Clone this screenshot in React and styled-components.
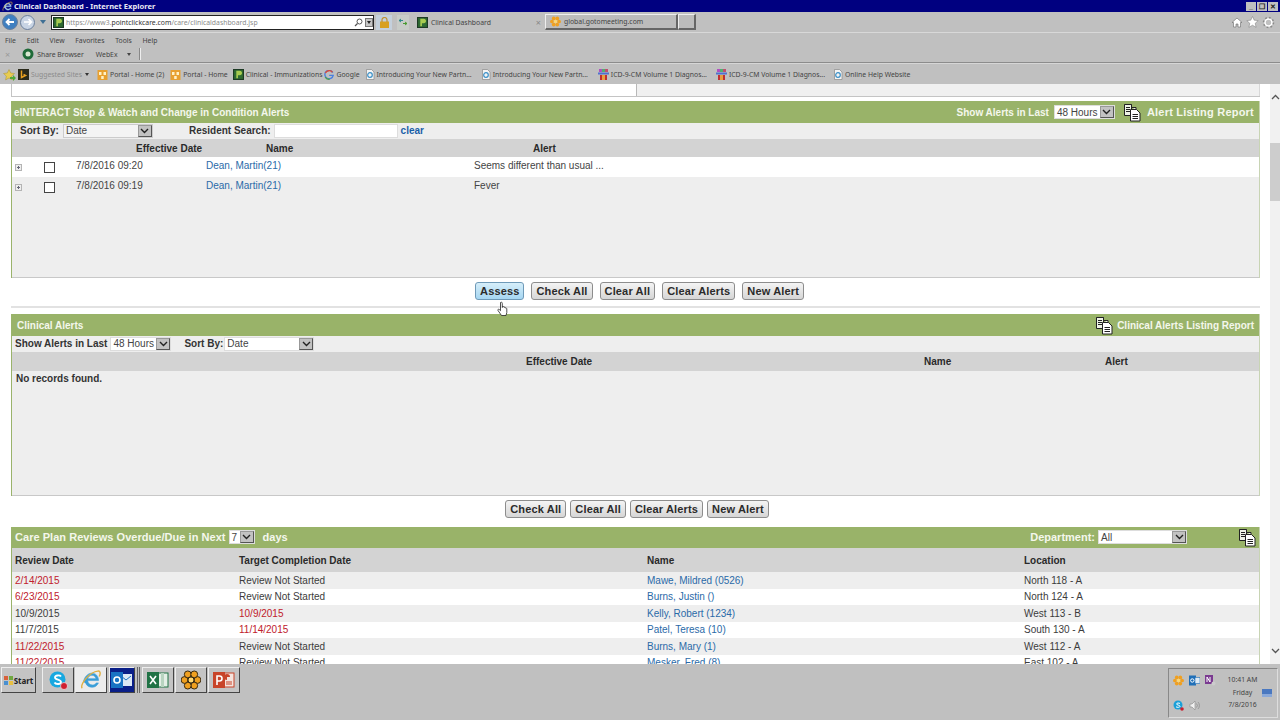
import React from "react";
import styled, { createGlobalStyle } from "styled-components";

const Global = createGlobalStyle`
  html, body { margin: 0; padding: 0; height: 100%; overflow: hidden; }
  body { font-family: "Liberation Sans", Arial, sans-serif; font-size: 10px; color: #222; }
  * { box-sizing: border-box; }
`;

const Page = styled.div`
  width: 1280px;
  height: 720px;
  display: flex;
  flex-direction: column;
  overflow: hidden;
  position: relative;
  background: #c0c0c0;
`;

/* ---------- browser chrome ---------- */

const TitleBar = styled.div`
  height: 12px;
  background: #000080;
  display: flex;
  align-items: center;
  padding-left: 2px;
  gap: 1px;
  color: #e8e8f4;
  font: bold 7.55px "Noto Sans", sans-serif;
`;

const WinButtons = styled.div`
  margin-left: auto;
  display: flex;
  gap: 1px;
  padding-right: 2px;
`;

const WinButton = styled.span`
  width: 10px;
  height: 9px;
  background: #c0c0c0;
  color: #222;
  font: bold 7px/9px "Liberation Sans", sans-serif;
  text-align: center;
`;

const AddressRow = styled.div`
  height: 21px;
  display: flex;
  align-items: center;
  padding-left: 2px;
  border-bottom: 1px solid #d8d8d8;
  position: relative;
`;

const NavCircle = styled.span`
  width: ${(p) => p.$size}px;
  height: ${(p) => p.$size}px;
  border-radius: 50%;
  background: ${(p) => p.$bg};
  border: 1px solid #6a7f9c;
  display: flex;
  align-items: center;
  justify-content: center;
  margin-right: 2px;
`;

const Caret = styled.span`
  width: 0;
  height: 0;
  border-left: ${(p) => p.$s || 3}px solid transparent;
  border-right: ${(p) => p.$s || 3}px solid transparent;
  border-top: ${(p) => (p.$s || 3) + 1}px solid ${(p) => p.$color || "#3f6f94"};
  margin: 0 ${(p) => p.$gap || 0}px;
`;

const AddressField = styled.div`
  width: 323px;
  height: 15px;
  background: #fff;
  border: 1px solid #222;
  display: flex;
  align-items: center;
  padding: 0 0 0 1px;
  font: 6.85px "Noto Sans", sans-serif;
  color: #8a8a8a;
  margin-left: 2px;
  b { font-weight: 400; color: #333; }
`;

const AddressText = styled.span`
  margin-left: 2px;
  flex: 1;
  white-space: nowrap;
`;

const DropBox = styled.span`
  width: 8px;
  height: 9px;
  background: #c6c6c6;
  border: 1px solid #777;
  display: flex;
  align-items: center;
  justify-content: center;
  margin-left: 2px;
`;

const ToolCell = styled.span`
  width: ${(p) => p.$w}px;
  height: 15px;
  background: ${(p) => p.$bg};
  display: flex;
  align-items: center;
  justify-content: center;
`;

const Tab = styled.div`
  height: 16px;
  width: ${(p) => p.$w}px;
  display: flex;
  align-items: center;
  gap: 3px;
  padding: 0 4px;
  font: 6.85px "Noto Sans", sans-serif;
  color: #444;
  background: ${(p) => (p.$raised ? "#bcbcbc" : "transparent")};
  border: ${(p) => (p.$raised ? "1px solid #666" : "none")};
  border-top-color: #eee;
  border-left-color: #eee;
  border-right-width: ${(p) => (p.$raised ? 2 : 0)}px;
  border-bottom-width: ${(p) => (p.$raised ? 2 : 0)}px;
  span:last-child { margin-left: auto; color: #888; font-size: 9px; }
`;

const RightTools = styled.div`
  margin-left: auto;
  display: flex;
  gap: 3px;
  padding-right: 5px;
  align-items: center;
`;

const MenuArea = styled.div`
  height: 30px;
  display: flex;
  flex-direction: column;
  border-bottom: 1px solid #8c8c8c;
  padding-left: 5px;
  font: 6.85px "Noto Sans", sans-serif;
  color: #444;
`;

const MenuRow = styled.div`
  height: 14px;
  display: flex;
  align-items: center;
  gap: ${(p) => p.$gap}px;
`;

const Sep = styled.span`
  width: 2px;
  height: 12px;
  background: #888;
  border-right: 1px solid #eee;
`;

const FavBar = styled.div`
  height: 21px;
  border-top: 1px solid #d6d6d6;
  display: flex;
  align-items: center;
  padding: 1px 0 0 3px;
  font: 6.85px "Noto Sans", sans-serif;
  color: #444;
  white-space: nowrap;
`;

const Fav = styled.span`
  display: inline-flex;
  align-items: center;
  gap: 2px;
  margin-left: ${(p) => p.$left}px;
  color: ${(p) => p.$color || "inherit"};
`;

/* ---------- content ---------- */

const Body = styled.div`
  height: 580px;
  display: flex;
  background: #fff;
  overflow: hidden;
`;

const Main = styled.div`
  width: 1270px;
  padding-left: 11px;
  padding-right: 10px;
  overflow: hidden;
`;

const Scrollbar = styled.div`
  width: 10px;
  background: #f1f1f1;
  display: flex;
  flex-direction: column;
  align-items: center;
  padding: 10px 0;
`;

const Thumb = styled.div`
  width: 10px;
  height: 58px;
  margin-top: 43px;
  background: #cdcdcd;
`;

const Chevron = styled.svg`
  width: 9px;
  height: 6px;
  flex: none;
  margin-top: ${(p) => (p.$bottom ? "auto" : "0")};
`;

const TopStub = styled.div`
  height: 13px;
  display: grid;
  grid-template-columns: 624px 1fr;
  border-bottom: 1px solid #c4c4c4;
  border-left: 1px solid #c4c4c4;
  margin-bottom: 4px;
`;

const StubRight = styled.div`
  background: #f0f0f0;
  border-left: 1px solid #b8b8b8;
  border-right: 1px solid #d8d8d8;
`;

const Section = styled.section`
  border-left: 1px solid #9ab36b;
  border-right: 1px solid #c8d4b4;
  margin-top: ${(p) => p.$top || 0}px;
`;

const GreenBar = styled.div`
  height: ${(p) => p.$h}px;
  background: #99b369;
  display: flex;
  align-items: center;
  padding: ${(p) => p.$pad || "0 5px 0 2px"};
  color: #f4f7ec;
  font-weight: bold;
  white-space: nowrap;
`;

const BarTitle = styled.span`
  font-size: ${(p) => p.$size || 10}px;
  letter-spacing: ${(p) => p.$ls || 0}px;
`;

const BarRight = styled.div`
  margin-left: auto;
  display: flex;
  align-items: center;
  gap: ${(p) => p.$gap || 5}px;
`;

const Select = styled.span`
  width: ${(p) => p.$w}px;
  height: ${(p) => p.$h || 14}px;
  margin-right: ${(p) => p.$mr || 0}px;
  background: ${(p) => p.$bg || "#fff"};
  display: inline-flex;
  align-items: center;
  justify-content: space-between;
  padding-left: 2px;
  font-weight: 400;
  font-size: 10px;
  color: #444;
  border: 1px solid ${(p) => p.$border || "#ddd"};
`;

const SelectBtn = styled.span`
  width: 14px;
  height: 100%;
  background: #c2c2c2;
  border: 1px solid #555;
  border-top-color: #999;
  border-left-color: #999;
  display: flex;
  align-items: center;
  justify-content: center;
`;

const FilterRow = styled.div`
  height: ${(p) => p.$h}px;
  background: #eeeeee;
  display: flex;
  align-items: center;
  padding-left: ${(p) => p.$left}px;
  padding-bottom: 1px;
  font-weight: bold;
  font-size: 10px;
  color: #333;
  white-space: nowrap;
`;

const Gap = styled.span`
  display: inline-block;
  flex: none;
  width: ${(p) => p.$w}px;
`;

const TextInput = styled.span`
  width: 124px;
  height: 14px;
  background: #fff;
  border: 1px solid #ddd;
  margin-left: 3px;
`;

const ClearLink = styled.span`
  color: #1a5fa8;
  margin-left: 3px;
`;

const HeadRow = styled.div`
  height: ${(p) => p.$h}px;
  background: #d3d3d3;
  display: grid;
  grid-template-columns: ${(p) => p.$cols};
  align-items: center;
  font-weight: bold;
  font-size: 10px;
  color: #2a2a2a;
`;

const AlertRow = styled.div`
  height: 20px;
  background: ${(p) => (p.$alt ? "#eeeeee" : "#fff")};
  display: grid;
  grid-template-columns: 32px 32px 130px 268px 1fr;
  align-items: center;
  padding-bottom: 3px;
  font-size: 10px;
  color: #444;
`;

const Expander = styled.span`
  width: 7px;
  height: 7px;
  margin: 4px 0 0 3px;
  border: 1px solid #b4b4b4;
  background:
    linear-gradient(#667, #667) center / 3px 1px no-repeat,
    linear-gradient(#667, #667) center / 1px 3px no-repeat,
    #eeeeee;
`;

const CheckBox = styled.span`
  width: 11px;
  height: 11px;
  background: #fff;
  border: 1px solid #444;
  margin-top: 4px;
`;

const PersonLink = styled.span`
  color: #2a6aa8;
`;

const Filler = styled.div`
  height: ${(p) => p.$h}px;
  background: #eeeeee;
  border-bottom: 1px solid #c8c8c8;
  font-weight: bold;
  font-size: 10px;
  color: #333;
  padding: ${(p) => p.$pad || 0};
`;

const ButtonBar = styled.div`
  height: ${(p) => p.$h}px;
  display: flex;
  justify-content: center;
  align-items: center;
  gap: ${(p) => p.$gap}px;
  padding-left: ${(p) => p.$shift || 0}px;
  padding-bottom: ${(p) => p.$down || 0}px;
  background: #fff;
  border-bottom: ${(p) => (p.$line ? "2px solid #e2e2e2" : "none")};
  margin: 0 -1px;
`;

const Btn = styled.button`
  height: 18px;
  padding: 0 4px;
  border-radius: 3px;
  border: 1px solid ${(p) => (p.$active ? "#6f9ab8" : "#8d8d8d")};
  background: ${(p) =>
    p.$active
      ? "linear-gradient(#d6eefa, #a6d6f2)"
      : "linear-gradient(#f4f4f4, #d6d6d6)"};
  font: bold 11px "Liberation Sans", sans-serif;
  letter-spacing: 0.15px;
  color: #2b2b2b;
`;

const CarePlanRow = styled.div`
  height: 16.5px;
  background: ${(p) => (p.$alt ? "#eeeeee" : "#fff")};
  display: grid;
  grid-template-columns: 224px 408px 377px 1fr;
  align-items: center;
  padding-left: 3px;
  font-size: 10px;
  color: #3c3c3c;
`;

const Overdue = styled.span`
  color: ${(p) => (p.$red ? "#c0202c" : "#3c3c3c")};
`;

/* ---------- taskbar ---------- */

const Taskbar = styled.div`
  height: 56px;
  flex: none;
  background: #c0c0c0;
  display: flex;
  align-items: flex-start;
  padding: 3px 2px 0 1px;
`;

const TaskGroup = styled.div`
  display: flex;
  gap: 1px;
  margin-left: ${(p) => p.$left || 0}px;
`;

const TaskBtn = styled.div`
  height: 26px;
  width: ${(p) => p.$w || 32}px;
  display: flex;
  align-items: center;
  justify-content: center;
  gap: 1px;
  background: ${(p) => (p.$active ? "#ececec" : p.$bg || "#c4c4c4")};
  border: 1px solid #eee;
  border-right-color: #444;
  border-bottom-color: #444;
  font: bold 8px "Noto Sans", sans-serif;
  color: #222;
`;

const TaskSep = styled.span`
  width: 3px;
  height: 26px;
  margin-left: ${(p) => p.$left}px;
  border-left: 1px solid ${(p) => p.$color};
  border-right: 1px solid ${(p) => p.$color};
`;

const Tray = styled.div`
  margin-left: auto;
  margin-top: 1px;
  width: 110px;
  height: 50px;
  border: 1px solid #888;
  border-right-color: #ddd;
  border-bottom-color: #ddd;
  display: grid;
  grid-template-columns: 54px 1fr 15px;
  align-items: center;
`;

const TrayIcons = styled.div`
  display: grid;
  grid-template-columns: repeat(3, 16px);
  gap: 14px 0;
  padding-left: 4px;
`;

const Clock = styled.div`
  font: 6.85px/12.500px "Noto Sans", sans-serif;
  color: #444;
  text-align: center;
`;

const Pointer = styled.svg`
  position: absolute;
  left: 497px;
  top: 301px;
  width: 11px;
  height: 16px;
`;

/* ---------- drawings ---------- */

const IeIcon = ({ size = 11, color = "#3d9ad6" }) => (
  <svg width={size} height={size} viewBox="0 0 16 16">
    <path d="M2.5 9.5C3 5.5 6 3 8.5 3c3 0 5 2.2 5 5.4H5.6c.2 2 1.5 3.2 3.3 3.2 1.2 0 2.2-.5 2.9-1.5h1.6c-.8 2-2.5 3.2-4.6 3.2-2.200 0-4-1.200-4.700-3M5.700 7h5.800C11.300 5.600 10.200 4.600 8.700 4.600 7.200 4.600 6 5.600 5.700 7Z" fill={color} stroke={color} strokeWidth=".4" />
    <path d="M1.500 14C0 11 7 2 13 1.500c2-.2 2 2 1 4" fill="none" stroke="#e0b040" strokeWidth="1" />
  </svg>
);

const PLogo = ({ size = 10 }) => (
  <svg width={size} height={size} viewBox="0 0 10 10" style={{ flex: "none" }}>
    <rect width="10" height="10" fill="#1d3a24" />
    <rect x="1" y="1" width="8" height="8" fill="#2f6b32" />
    <path d="M3 8.500V1.500h3c1.600 0 2.200 1 2.200 2.100S7.600 5.700 6 5.700H4.500v2.800Z" fill="#a8cc50" />
  </svg>
);

const PortalIcon = () => (
  <svg width="11" height="10" viewBox="0 0 10 10">
    <rect width="10" height="10" fill="#e8a030" />
    <rect x="1.500" y="2" width="2.500" height="3" fill="#fff2c8" />
    <rect x="6" y="2" width="2.500" height="3" fill="#fff2c8" />
    <rect x="3.700" y="6" width="2.500" height="3" fill="#fff2c8" />
  </svg>
);

const PageIeIcon = () => (
  <svg width="10" height="11" viewBox="0 0 10 11">
    <path d="M1.500.500h5l2.500 2.500v7.500h-7.500Z" fill="#f4f4f4" stroke="#888" strokeWidth=".7" />
    <circle cx="5" cy="6" r="2.300" fill="none" stroke="#3a90c8" strokeWidth="1.200" />
  </svg>
);

const IcdIcon = () => (
  <svg width="11" height="11" viewBox="0 0 11 11">
    <rect x="1" width="3" height="3" fill="#b050c0" />
    <rect x="4" width="3" height="3" fill="#50b070" />
    <rect x="7" width="3" height="3" fill="#c05070" />
    <rect y="3.500" width="11" height="2" fill="#5070d0" />
    <rect x="2" y="6" width="7" height="5" fill="#c03030" />
    <rect x="4" y="6" width="3" height="5" fill="#e8a040" />
  </svg>
);

const GoogleIcon = () => (
  <svg width="10" height="10" viewBox="0 0 10 10">
    <path d="M8.800 2.600A4.200 4.200 0 1 0 9.200 5.400H5.200" fill="none" stroke="#4a80e0" strokeWidth="1.400" />
    <path d="M1.400 3a4.200 4.200 0 0 1 7-.8" fill="none" stroke="#d84a3a" strokeWidth="1.400" />
    <path d="M1.200 7a4.200 4.200 0 0 0 4.500 2.200" fill="none" stroke="#50a050" strokeWidth="1.400" />
  </svg>
);

const FlowerIcon = ({ size = 10, dark }) => (
  <svg width={size} height={size} viewBox="0 0 20 20" style={{ flex: "none" }}>
    {[0, 60, 120, 180, 240, 300].map((a) => (
      <circle
        key={a}
        cx={10 + 6.500 * Math.cos((a * Math.PI) / 180)}
        cy={10 + 6.500 * Math.sin((a * Math.PI) / 180)}
        r="3.400"
        fill="#f0a020"
        stroke={dark ? "#3a2a10" : "none"}
        strokeWidth="1"
      />
    ))}
    <circle cx="10" cy="10" r="3" fill="#ffd870" stroke={dark ? "#3a2a10" : "none"} />
  </svg>
);

const DocsIcon = ({ size = 19 }) => (
  <svg width={size} height={size} viewBox="0 0 19 19" style={{ flex: "none" }}>
    <path d="M1.500 1.500h7v3H13v2" fill="#fff" stroke="#222" />
    <path d="M1.500 1.500h7v11h-7Z" fill="#eef2e6" stroke="#222" />
    <path d="M3 4.500h4M3 6.500h4M3 8.500h4" stroke="#222" />
    <path d="M7.500 6.500h6l3.500 3.500v8H7.500Z" fill="#fff" stroke="#222" />
    <path d="M9.500 11.500h5.500M9.500 13.500h5.500M9.500 15.500h5.500" stroke="#222" />
  </svg>
);

const SmallArrow = () => (
  <svg width="9" height="6" viewBox="0 0 9 6">
    <path d="M1 1l3.500 3.500L8 1" fill="none" stroke="#222" strokeWidth="1.400" />
  </svg>
);

const TrayEnv = () => (
  <svg width="11" height="11" viewBox="0 0 11 11">
    <rect width="7" height="10" y=".5" fill="#1f6fb8" />
    <rect x="6" y="2.500" width="5" height="6" fill="#dfeaf4" stroke="#1f6fb8" strokeWidth=".6" />
    <circle cx="3.300" cy="5.500" r="1.700" fill="none" stroke="#fff" />
  </svg>
);

const favourites = [
  { icon: <PortalIcon />, text: "Portal - Home (2)", left: 5 },
  { icon: <PortalIcon />, text: "Portal - Home", left: 6 },
  { icon: <PLogo size={11} />, text: "Clinical - Immunizations", left: 5 },
  { icon: <GoogleIcon />, text: "Google", left: 2 },
  { icon: <PageIeIcon />, text: "Introducing Your New Partn...", left: 5 },
  { icon: <PageIeIcon />, text: "Introducing Your New Partn...", left: 9 },
  { icon: <IcdIcon />, text: "ICD-9-CM Volume 1 Diagnos...", left: 10 },
  { icon: <IcdIcon />, text: "ICD-9-CM Volume 1 Diagnos...", left: 9 },
  { icon: <PageIeIcon />, text: "Online Help Website", left: 8 },
];

const carePlans = [
  { date: "2/14/2015", dateRed: true, target: "Review Not Started", name: "Mawe, Mildred (0526)", loc: "North 118 - A", alt: true },
  { date: "6/23/2015", dateRed: true, target: "Review Not Started", name: "Burns, Justin ()", loc: "North 124 - A" },
  { date: "10/9/2015", target: "10/9/2015", targetRed: true, name: "Kelly, Robert (1234)", loc: "West 113 - B", alt: true },
  { date: "11/7/2015", target: "11/14/2015", targetRed: true, name: "Patel, Teresa (10)", loc: "South 130 - A" },
  { date: "11/22/2015", dateRed: true, target: "Review Not Started", name: "Burns, Mary (1)", loc: "West 112 - A", alt: true },
  { date: "11/22/2015", dateRed: true, target: "Review Not Started", name: "Mesker, Fred (8)", loc: "East 102 - A" },
];

const App = () => {
  return (
    <Page>
      <Global />

      <TitleBar>
        <IeIcon size={11} color="#9cc4e8" />
        Clinical Dashboard - Internet Explorer
        <WinButtons>
          <WinButton>_</WinButton>
          <WinButton>❐</WinButton>
          <WinButton>✕</WinButton>
        </WinButtons>
      </TitleBar>

      <AddressRow>
        <NavCircle $size={16} $bg="#3f7fc0">
          <svg width="10" height="8" viewBox="0 0 10 8">
            <path d="M9 4H2M4.500 1L1.500 4l3 3" fill="none" stroke="#fff" strokeWidth="1.800" />
          </svg>
        </NavCircle>
        <NavCircle $size={15} $bg="#c8d4e4">
          <svg width="10" height="8" viewBox="0 0 10 8">
            <path d="M1 4h7M5.500 1l3 3-3 3" fill="none" stroke="#fff" strokeWidth="1.600" />
          </svg>
        </NavCircle>
        <Caret $gap={3} />
        <AddressField>
          <PLogo size={11} />
          <AddressText>
            https://www3.<b>pointclickcare.com</b>/care/clinicaldashboard.jsp
          </AddressText>
          <svg width="9" height="9" viewBox="0 0 9 9">
            <circle cx="5.500" cy="3.500" r="2.500" fill="none" stroke="#555" />
            <path d="M3.500 5.500L1 8" stroke="#555" strokeWidth="1.200" />
          </svg>
          <DropBox>
            <Caret $color="#222" $s={2} />
          </DropBox>
        </AddressField>
        <Gap $w={2} />
        <ToolCell $bg="#c4d0dc" $w={16}>
          <svg width="9" height="11" viewBox="0 0 9 11">
            <rect y="4.500" width="9" height="6.500" fill="#d8a020" />
            <path d="M2 5V3a2.500 2.500 0 0 1 5 0v2" fill="none" stroke="#c09030" strokeWidth="1.200" />
          </svg>
        </ToolCell>
        <Gap $w={5} />
        <ToolCell $bg="#c8ccc8" $w={12}>
          <svg width="10" height="8" viewBox="0 0 10 8">
            <path d="M1 2.500h4M3 1L1 2.500 3 4" fill="none" stroke="#2f8a8a" />
            <path d="M9 5.500H5M7 4l2 1.500L7 7" fill="none" stroke="#4a9a30" />
          </svg>
        </ToolCell>
        <Gap $w={4} />
        <Tab $w={132}>
          <PLogo size={11} />
          Clinical Dashboard
          <span>×</span>
        </Tab>
        <Tab $w={133} $raised>
          <FlowerIcon size={11} />
          global.gotomeeting.com
        </Tab>
        <Tab $w={18} $raised />
        <RightTools>
          <svg width="12" height="11" viewBox="0 0 12 11">
            <path d="M6 1L1 5.500h1.500V10h2.500V7h2v3h2.500V5.500H11Z" fill="#fff" stroke="#666" strokeWidth=".6" />
          </svg>
          <svg width="13" height="12" viewBox="0 0 13 12">
            <path d="M6.500.500l1.700 3.700 4 .4-3 2.700.9 4-3.600-2.100-3.600 2.100.9-4-3-2.700 4-.4Z" fill="#fff" stroke="#777" strokeWidth=".5" />
          </svg>
          <svg width="13" height="13" viewBox="0 0 13 13">
            <circle cx="6.500" cy="6.500" r="3.500" fill="none" stroke="#fff" strokeWidth="1.600" />
            <circle cx="6.500" cy="6.500" r="5" fill="none" stroke="#8a8a8a" strokeWidth="1.500" strokeDasharray="1.800 2.100" />
          </svg>
        </RightTools>
      </AddressRow>

      <MenuArea>
        <MenuRow $gap={10.7}>
          <span>File</span>
          <span>Edit</span>
          <span>View</span>
          <span>Favorites</span>
          <span>Tools</span>
          <span>Help</span>
        </MenuRow>
        <MenuRow $gap={3}>
          <span style={{ color: "#999", fontSize: 9 }}>×</span>
          <Gap $w={6} />
          <svg width="12" height="12" viewBox="0 0 12 12">
            <circle cx="6" cy="6" r="5.500" fill="#1f6a38" />
            <circle cx="6" cy="6" r="2.500" fill="#d8e8d0" />
          </svg>
          <span>Share Browser</span>
          <Gap $w={6} />
          <span>WebEx</span>
          <Gap $w={3} />
          <Caret $color="#444" $s={2} />
          <Gap $w={2} />
          <Sep />
        </MenuRow>
      </MenuArea>

      <FavBar>
        <svg width="13" height="12" viewBox="0 0 13 12">
          <path d="M6 .500l1.700 3.500 3.800.5-2.800 2.600.7 3.800L6 9l-3.400 1.900.7-3.800L.5 4.500 4.300 4Z" fill="#e8cc50" stroke="#a89030" strokeWidth=".5" />
          <path d="M7 8h3V6l3 3-3 3v-2H7Z" fill="#50a838" />
        </svg>
        <Gap $w={2} />
        <svg width="11" height="11" viewBox="0 0 11 11">
          <rect width="11" height="11" fill="#2a2a1a" />
          <path d="M3.500 1.500v7l4-2-2-1" fill="none" stroke="#e8a020" strokeWidth="1.500" />
        </svg>
        <Fav $left={2} $color="#8c8c8c">Suggested Sites</Fav>
        <Caret $color="#333" $s={2} $gap={3} />
        {favourites.map((f, i) => (
          <Fav key={i} $left={f.left}>
            {f.icon}
            {f.text}
          </Fav>
        ))}
      </FavBar>

      <Body>
        <Main>
          <TopStub>
            <div />
            <StubRight />
          </TopStub>

          <Section>
            <GreenBar $h={22}>
              <BarTitle>eINTERACT Stop &amp; Watch and Change in Condition Alerts</BarTitle>
              <BarRight>
                <BarTitle>Show Alerts in Last</BarTitle>
                <Select $w={61} $mr={3}>
                  48 Hours
                  <SelectBtn><SmallArrow /></SelectBtn>
                </Select>
                <DocsIcon />
                <BarTitle $size={11} $ls={0.22}>Alert Listing Report</BarTitle>
              </BarRight>
            </GreenBar>
            <FilterRow $h={16} $left={8}>
              Sort By:
              <Gap $w={4} />
              <Select $w={90} $bg="#f4f4f4" $border="#ccc">
                Date
                <SelectBtn><SmallArrow /></SelectBtn>
              </Select>
              <Gap $w={36} />
              Resident Search:
              <TextInput />
              <ClearLink>clear</ClearLink>
            </FilterRow>
            <HeadRow $h={18} $cols="124px 130px 267px 1fr">
              <span />
              <span>Effective Date</span>
              <span>Name</span>
              <span>Alert</span>
            </HeadRow>
            <AlertRow>
              <Expander />
              <CheckBox />
              <span>7/8/2016 09:20</span>
              <PersonLink>Dean, Martin(21)</PersonLink>
              <span>Seems different than usual ...</span>
            </AlertRow>
            <AlertRow $alt>
              <Expander />
              <CheckBox />
              <span>7/8/2016 09:19</span>
              <PersonLink>Dean, Martin(21)</PersonLink>
              <span>Fever</span>
            </AlertRow>
            <Filler $h={81} />
            <ButtonBar $h={30} $gap={7} $line $shift={8} $down={3}>
              <Btn $active>Assess</Btn>
              <Btn>Check All</Btn>
              <Btn>Clear All</Btn>
              <Btn>Clear Alerts</Btn>
              <Btn>New Alert</Btn>
            </ButtonBar>
          </Section>

          <Section $top={6}>
            <GreenBar $h={22} $pad="0 5px 0 5px">
              <BarTitle>Clinical Alerts</BarTitle>
              <BarRight $gap={3}>
                <DocsIcon />
                <BarTitle>Clinical Alerts Listing Report</BarTitle>
              </BarRight>
            </GreenBar>
            <FilterRow $h={16} $left={3}>
              Show Alerts in Last
              <Gap $w={3} />
              <Select $w={61}>
                48 Hours
                <SelectBtn><SmallArrow /></SelectBtn>
              </Select>
              <Gap $w={13} />
              Sort By:
              <Gap $w={1} />
              <Select $w={90}>
                Date
                <SelectBtn><SmallArrow /></SelectBtn>
              </Select>
            </FilterRow>
            <HeadRow $h={19} $cols="514px 398px 181px 1fr">
              <span />
              <span>Effective Date</span>
              <span>Name</span>
              <span>Alert</span>
            </HeadRow>
            <Filler $h={125} $pad="2px 4px">No records found.</Filler>
            <ButtonBar $h={31} $gap={4} $shift={3} $down={6}>
              <Btn>Check All</Btn>
              <Btn>Clear All</Btn>
              <Btn>Clear Alerts</Btn>
              <Btn>New Alert</Btn>
            </ButtonBar>
          </Section>

          <Section>
            <GreenBar $h={21} $pad="0 2px 1px 3px">
              <BarTitle $size={11} $ls={0.04}>Care Plan Reviews Overdue/Due in Next</BarTitle>
              <Gap $w={3} />
              <Select $w={26}>
                7
                <SelectBtn><SmallArrow /></SelectBtn>
              </Select>
              <Gap $w={8} />
              <BarTitle $size={11}>days</BarTitle>
              <BarRight $gap={3}>
                <BarTitle $size={11}>Department:</BarTitle>
                <Select $w={89}>
                  All
                  <SelectBtn><SmallArrow /></SelectBtn>
                </Select>
                <Gap $w={45} />
                <DocsIcon />
              </BarRight>
            </GreenBar>
            <HeadRow $h={24} $cols="227px 408px 377px 1fr">
              <span style={{ paddingLeft: 3 }}>Review Date</span>
              <span>Target Completion Date</span>
              <span>Name</span>
              <span>Location</span>
            </HeadRow>
            {carePlans.map((r, i) => (
              <CarePlanRow key={i} $alt={r.alt}>
                <Overdue $red={r.dateRed}>{r.date}</Overdue>
                <Overdue $red={r.targetRed}>{r.target}</Overdue>
                <PersonLink>{r.name}</PersonLink>
                <span>{r.loc}</span>
              </CarePlanRow>
            ))}
          </Section>
        </Main>
        <Scrollbar>
          <Chevron viewBox="0 0 9 6">
            <path d="M1 5l3.500-3.500L8 5" fill="none" stroke="#555" strokeWidth="1.300" />
          </Chevron>
          <Thumb />
          <Chevron viewBox="0 0 9 6" $bottom>
            <path d="M1 1l3.500 3.500L8 1" fill="none" stroke="#555" strokeWidth="1.300" />
          </Chevron>
        </Scrollbar>
      </Body>

      <Taskbar>
        <TaskBtn $w={35}>
          <svg width="9" height="9" viewBox="0 0 9 9">
            <rect width="4" height="4" fill="#d8603a" />
            <rect x="5" width="4" height="4" fill="#70a840" />
            <rect y="5" width="4" height="4" fill="#4a90d0" />
            <rect x="5" y="5" width="4" height="4" fill="#e8c040" />
          </svg>
          Start
        </TaskBtn>
        <TaskGroup $left={6}>
          <TaskBtn>
            <svg width="20" height="20" viewBox="0 0 20 20">
              <circle cx="9.500" cy="9.500" r="8" fill="#18a8e0" />
              <path d="M13 6.500C12 5 7 5 7 7.500s6 1.800 6 4.500-5.500 2.500-6.500 .5" fill="none" stroke="#fff" strokeWidth="1.800" />
              <circle cx="16" cy="16" r="3.500" fill="#d02030" stroke="#fff" strokeWidth=".6" />
            </svg>
          </TaskBtn>
          <TaskBtn $active>
            <IeIcon size={22} color="#3a9ed8" />
          </TaskBtn>
        </TaskGroup>
        <TaskGroup $left={2}>
          <TaskBtn $w={26} $bg="#0a1f88">
            <svg width="22" height="18" viewBox="0 0 22 18">
              <rect x="9" y="3" width="12" height="12" fill="#dce8f4" />
              <path d="M10 5l5 4 5-4" fill="none" stroke="#1a70c0" />
              <rect y="1" width="12" height="16" fill="#1872c4" />
              <circle cx="6" cy="9" r="3" fill="none" stroke="#fff" strokeWidth="1.600" />
            </svg>
          </TaskBtn>
        </TaskGroup>
        <TaskSep $left={2} $color="#666" />
        <TaskGroup $left={2}>
          <TaskBtn>
            <svg width="22" height="18" viewBox="0 0 22 18">
              <rect x="10" y="2" width="11" height="14" fill="#e4efe6" stroke="#207245" />
              <rect x="14" y="2" width="3" height="14" fill="#b8d4c0" />
              <rect y="1" width="12" height="16" fill="#207245" />
              <path d="M3 5l6 8M9 5l-6 8" stroke="#fff" strokeWidth="1.600" />
            </svg>
          </TaskBtn>
          <TaskBtn>
            <FlowerIcon size={20} dark />
          </TaskBtn>
          <TaskBtn>
            <svg width="22" height="18" viewBox="0 0 22 18">
              <rect x="9" y="2" width="12" height="14" fill="#f4e4de" stroke="#c8452a" />
              <path d="M14 9a3 3 0 1 1 3-3h-3Z" fill="#c8452a" />
              <path d="M13 11h6M13 13h6" stroke="#c8452a" />
              <rect y="1" width="12" height="16" fill="#c8452a" />
              <path d="M4 14V5h2.500a2 2 0 0 1 0 5H4" fill="none" stroke="#fff" strokeWidth="1.600" />
            </svg>
          </TaskBtn>
        </TaskGroup>
        <Tray>
          <TrayIcons>
            <FlowerIcon size={11} />
            <TrayEnv />
            <svg width="11" height="11" viewBox="0 0 11 11">
              <rect width="8" height="9" fill="#7a3a90" />
              <path d="M2 7V2l3 5V2" fill="none" stroke="#fff" />
              <circle cx="8.500" cy="8.500" r="2" fill="#ccc" />
            </svg>
            <svg width="11" height="11" viewBox="0 0 11 11">
              <circle cx="5" cy="5" r="4.500" fill="#1aa0d8" />
              <path d="M7 3.500C6 2.800 3.500 2.800 3.500 4S7 5 7 6.300 4 7.600 3 6.800" fill="none" stroke="#fff" />
              <circle cx="9" cy="9" r="1.800" fill="#c82030" />
            </svg>
            <svg width="11" height="11" viewBox="0 0 11 11">
              <path d="M1 4h2l3-3v9L3 7H1Z" fill="#f0f0f0" stroke="#888" strokeWidth=".6" />
              <path d="M7.500 3.500a3 3 0 0 1 0 4M9 2a5 5 0 0 1 0 7" fill="none" stroke="#888" strokeWidth=".7" />
            </svg>
          </TrayIcons>
          <Clock>
            <div>10:41 AM</div>
            <div>Friday</div>
            <div>7/8/2016</div>
          </Clock>
          <svg width="10" height="8" viewBox="0 0 10 8">
            <rect width="10" height="8" fill="#4a78c0" />
            <rect y="5" width="10" height="3" fill="#8aa8d8" />
          </svg>
        </Tray>
      </Taskbar>

      <Pointer viewBox="0 0 11 16">
        <path d="M3.500 1.500c1-.8 1.800 0 1.800 1v4l.2-.9c.8-.5 1.500 0 1.500.8.700-.5 1.400-.1 1.500.6.800-.2 1.300.3 1.300 1v3.500L9 14.500H4.500L1 9.500c-.5-1 .5-1.700 1.300-1l1.200 1.200Z" fill="#fff" stroke="#222" strokeWidth=".8" />
      </Pointer>
    </Page>
  );
};

export default App;
